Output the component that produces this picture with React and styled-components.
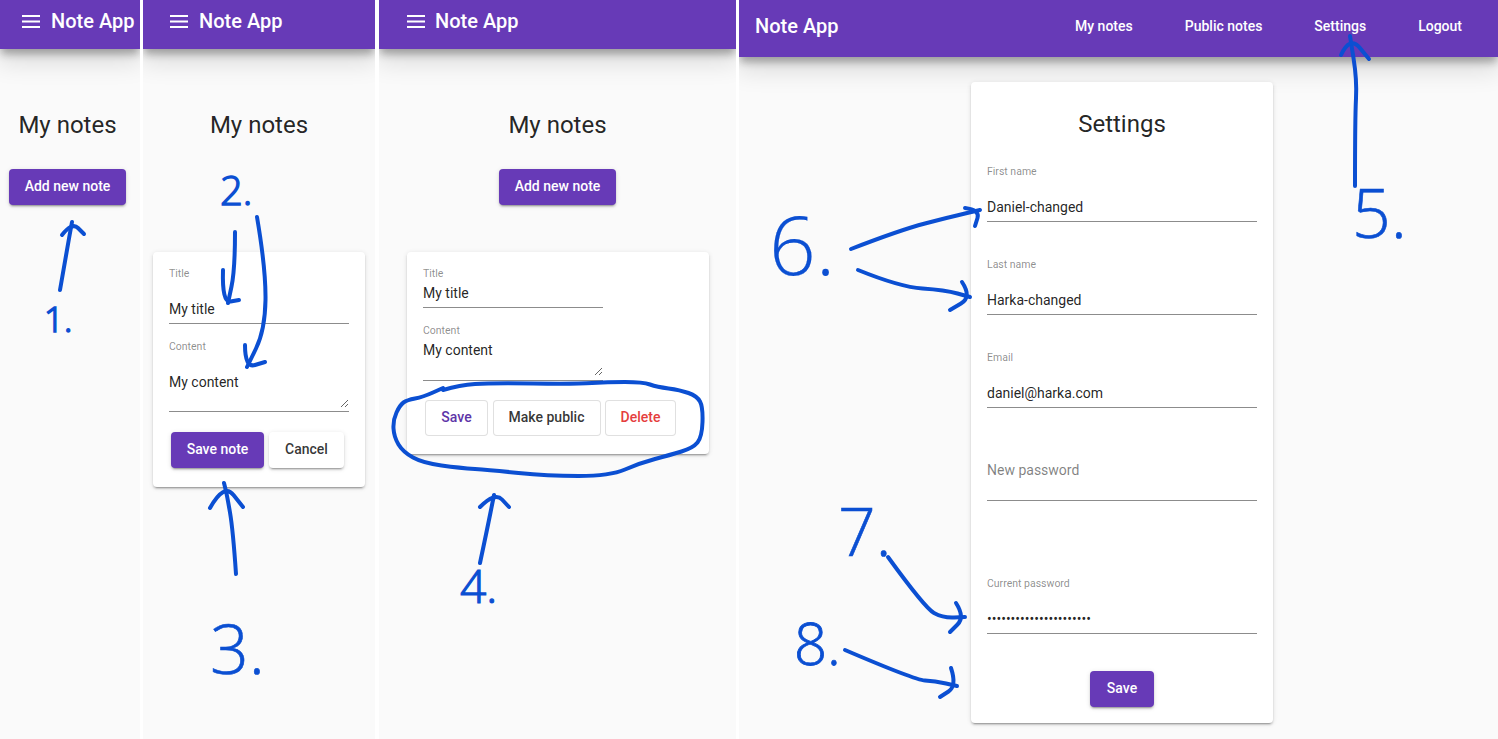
import styled, { createGlobalStyle } from "styled-components";

const GlobalStyle = createGlobalStyle`
   html, body {
      margin: 0;
      padding: 0;
      background: #fff;
   }
   * {
      box-sizing: border-box;
   }
`;

const Page = styled.div`
   position: relative;
   display: flex;
   width: 1498px;
   height: 739px;
   overflow: hidden;
   background: #fff;
   font-family: Roboto, "Liberation Sans", sans-serif;
   color: rgba(0, 0, 0, 0.87);
`;

const Panel = styled.section`
   display: flex;
   flex-direction: column;
   flex: none;
   width: ${(props) => props.$width}px;
   margin-left: ${(props) => props.$left || 0}px;
   height: 100%;
   overflow: hidden;
   background: #fafafa;
`;

const Toolbar = styled.header`
   display: flex;
   align-items: center;
   flex: none;
   height: ${(props) => (props.$wide ? 57 : 49)}px;
   padding: 0 ${(props) => (props.$wide ? 36 : 0)}px
      ${(props) => (props.$wide ? 5 : 7)}px ${(props) => props.$pad}px;
   background: #673ab7;
   color: #fff;
   box-shadow: 0 6px 8px -1px rgba(0, 0, 0, 0.3), 0 12px 24px 2px rgba(0, 0, 0, 0.12);
`;

const MenuIcon = styled.svg`
   flex: none;
   width: 18px;
   height: 13px;
   margin-right: ${(props) => props.$gap}px;
   fill: #fff;
`;

const AppTitle = styled.span`
   font-size: 20px;
   font-weight: 500;
   line-height: 28px;
   white-space: nowrap;
`;

const Nav = styled.nav`
   display: flex;
   gap: 52px;
   margin-left: auto;
`;

const NavLink = styled.a`
   font-size: 14px;
   font-weight: 500;
   color: #fff;
   white-space: nowrap;
`;

const Main = styled.main`
   display: flex;
   flex-direction: column;
   align-items: center;
   flex: 1;
   padding-right: ${(props) => props.$right || 0}px;
   padding-left: ${(props) => props.$left || 0}px;
`;

const Heading = styled.h1`
   margin: 60px 0 28px;
   font-size: 24px;
   font-weight: 400;
   line-height: 32px;
`;

const Card = styled.div`
   width: ${(props) => props.$width}px;
   margin-top: ${(props) => props.$top}px;
   margin-left: ${(props) => props.$shift || 0}px;
   padding: ${(props) => props.$padTop || 16}px 16px ${(props) => props.$padBottom}px;
   background: #fff;
   border-radius: 4px;
   box-shadow: 0 3px 1px -2px rgba(0, 0, 0, 0.2), 0 2px 2px 0 rgba(0, 0, 0, 0.14),
      0 1px 5px 0 rgba(0, 0, 0, 0.12);
`;

const CardTitle = styled.h2`
   margin: 0 0 26px;
   font-size: 24px;
   font-weight: 400;
   line-height: 32px;
   text-align: center;
`;

const Field = styled.label`
   display: block;
   width: ${(props) => props.$width || 180}px;
   margin-top: ${(props) => props.$top || 0}px;
   padding-bottom: ${(props) => (props.$pad === undefined ? 4 : props.$pad)}px;
   border-bottom: 1px solid #8c8c8c;
`;

const FieldLabel = styled.span`
   display: block;
   height: 12px;
   margin-bottom: ${(props) => props.$gap}px;
   font-size: 10.5px;
   line-height: 12px;
   color: rgba(0, 0, 0, 0.46);
`;

const Input = styled.input`
   display: block;
   width: 100%;
   height: 20px;
   padding: 0;
   border: none;
   outline: none;
   background: transparent;
   font: 400 14px/20px Roboto, "Liberation Sans", sans-serif;
   color: rgba(0, 0, 0, 0.87);
   &::placeholder {
      color: rgba(0, 0, 0, 0.5);
      opacity: 1;
   }
`;

const TextArea = styled.textarea`
   display: block;
   width: 100%;
   height: 36px;
   padding: 0;
   margin: 0;
   border: none;
   outline: none;
   background: transparent;
   font: 400 14px/20px Roboto, "Liberation Sans", sans-serif;
   color: rgba(0, 0, 0, 0.87);
   resize: vertical;
`;

const ButtonRow = styled.div`
   display: flex;
   gap: ${(props) => props.$gap}px;
   margin-top: ${(props) => props.$top}px;
   padding-left: 2px;
`;

const Button = styled.button`
   display: block;
   flex: none;
   height: 36px;
   width: ${(props) => props.$width}px;
   padding: 0 0 2px;
   margin: 0;
   border: none;
   border-radius: 4px;
   font: 500 14px/34px Roboto, "Liberation Sans", sans-serif;
   background: ${(props) => (props.$primary ? "#673ab7" : "#fff")};
   color: ${(props) => (props.$primary ? "#fff" : "rgba(0, 0, 0, 0.8)")};
   box-shadow: 0 3px 1px -2px rgba(0, 0, 0, 0.2), 0 2px 2px 0 rgba(0, 0, 0, 0.14),
      0 1px 5px 0 rgba(0, 0, 0, 0.12);
`;

const StrokedButton = styled.button`
   display: block;
   flex: none;
   height: 36px;
   width: ${(props) => props.$width}px;
   padding: 0 0 2px;
   margin: 0;
   border: 1px solid rgba(0, 0, 0, 0.12);
   border-radius: 4px;
   background: #fff;
   font: 500 14px/32px Roboto, "Liberation Sans", sans-serif;
   color: ${(props) => props.$color || "rgba(0, 0, 0, 0.8)"};
`;

const CenteredAction = styled.div`
   display: flex;
   justify-content: center;
   margin-top: 37px;
`;

const Ink = styled.svg`
   position: absolute;
   top: 0;
   left: 0;
   width: 1498px;
   height: 739px;
   pointer-events: none;
`;

const InkLine = styled.path`
   fill: none;
   stroke: #0b4fd2;
   stroke-width: 4px;
   stroke-linecap: round;
   stroke-linejoin: round;
`;

const InkNumber = styled.text`
   font-family: "Open Sans", "Noto Sans", sans-serif;
   font-weight: 300;
   font-size: ${(props) => props.$size}px;
   fill: #0b4fd2;
   stroke: #0b4fd2;
   stroke-width: ${(props) => props.$weight}px;
`;

// rounds a list of points off into one pen stroke
function smooth(points) {
   let d = `M${points[0][0]} ${points[0][1]}`;
   for (let i = 1; i < points.length - 1; i++) {
      const midX = (points[i][0] + points[i + 1][0]) / 2;
      const midY = (points[i][1] + points[i + 1][1]) / 2;
      d += ` Q${points[i][0]} ${points[i][1]} ${midX} ${midY}`;
   }
   const last = points[points.length - 1];
   return `${d} L${last[0]} ${last[1]}`;
}

const strokes = [
   // 1
   [[60, 290], [66, 255], [72, 222]],
   [[62, 235], [72, 222], [84, 234]],
   // 2
   [[235, 232], [235, 270], [228, 303]],
   [[223, 270], [222, 303], [239, 300]],
   [[257, 217], [266, 270], [265, 330], [247, 367]],
   [[245, 345], [245, 368], [265, 362]],
   // 3
   [[236, 574], [233, 530], [227, 495], [224, 483]],
   [[210, 508], [224, 483], [243, 507]],
   // 4 and the loop round the buttons
   [
      [443, 390], [460, 385], [490, 383], [577, 384], [607, 382], [643, 382], [657, 387],
      [680, 390], [697, 396], [703, 407], [702, 437], [693, 448], [670, 455], [640, 463],
      [610, 476], [547, 476], [490, 470], [460, 468], [423, 463], [403, 452], [394, 437],
      [393, 420], [400, 405], [407, 400], [423, 397], [443, 388],
   ],
   [[480, 563], [487, 530], [494, 495]],
   [[480, 507], [495, 492], [509, 507]],
   // 5
   [[1355, 186], [1355, 117], [1357, 80], [1350, 36]],
   [[1341, 55], [1350, 36], [1369, 59]],
   // 6
   [[851, 249], [900, 230], [950, 217], [980, 210]],
   [[965, 208], [980, 210], [975, 226]],
   [[858, 270], [900, 287], [945, 290], [970, 297]],
   [[962, 282], [972, 297], [950, 310]],
   // 7
   [[888, 557], [925, 608], [943, 618], [965, 617]],
   [[956, 603], [965, 617], [950, 632]],
   // 8
   [[845, 650], [915, 680], [935, 681], [957, 686]],
   [[951, 668], [957, 686], [940, 697]],
];

const numbers = [
   { label: "1.", x: 44, y: 332, size: 35, weight: 1.6 },
   { label: "2.", x: 220, y: 205, size: 40, weight: 1.4 },
   { label: "3.", x: 210, y: 674, size: 68, weight: 0.6 },
   { label: "4.", x: 460, y: 603, size: 46, weight: 1.2 },
   { label: "5.", x: 1352, y: 238, size: 68, weight: 0.6 },
   { label: "6.", x: 769, y: 275, size: 82, weight: 0.2 },
   { label: "7.", x: 838, y: 556, size: 66, weight: 0.6 },
   { label: "8.", x: 794, y: 665, size: 58, weight: 0.8 },
];

function MobileBar({ pad, gap = 11 }) {
   return (
      <Toolbar $pad={pad}>
         <MenuIcon viewBox="0 0 18 13" $gap={gap}>
            <rect width="18" height="2" />
            <rect y="5.5" width="18" height="2" />
            <rect y="11" width="18" height="2" />
         </MenuIcon>
         <AppTitle>Note App</AppTitle>
      </Toolbar>
   );
}

function App() {
   return (
      <Page>
         <GlobalStyle />

         <Panel $width={140}>
            <MobileBar pad={22} />
            <Main $right={5}>
               <Heading>My notes</Heading>
               <Button $primary $width={117}>Add new note</Button>
            </Main>
         </Panel>

         <Panel $width={232} $left={3}>
            <MobileBar pad={27} />
            <Main>
               <Heading>My notes</Heading>
               <Card $width={212} $top={83} $padBottom={19}>
                  <Field>
                     <FieldLabel $gap={19}>Title</FieldLabel>
                     <Input readOnly defaultValue="My title" />
                  </Field>
                  <Field $top={17} $pad={3}>
                     <FieldLabel $gap={19}>Content</FieldLabel>
                     <TextArea readOnly defaultValue="My content" />
                  </Field>
                  <ButtonRow $gap={5} $top={20}>
                     <Button $primary $width={93}>Save note</Button>
                     <Button $width={75}>Cancel</Button>
                  </ButtonRow>
               </Card>
            </Main>
         </Panel>

         <Panel $width={357} $left={4}>
            <MobileBar pad={28} gap={10} />
            <Main>
               <Heading>My notes</Heading>
               <Button $primary $width={117}>Add new note</Button>
               <Card $width={302} $top={47} $shift={1} $padBottom={18}>
                  <Field>
                     <FieldLabel $gap={3}>Title</FieldLabel>
                     <Input readOnly defaultValue="My title" />
                  </Field>
                  <Field $top={17}>
                     <FieldLabel $gap={3}>Content</FieldLabel>
                     <TextArea readOnly defaultValue="My content" />
                  </Field>
                  <ButtonRow $gap={4.5} $top={19}>
                     <StrokedButton $width={63} $color="#5e35a8">Save</StrokedButton>
                     <StrokedButton $width={108}>Make public</StrokedButton>
                     <StrokedButton $width={71} $color="#e53e3e">Delete</StrokedButton>
                  </ButtonRow>
               </Card>
            </Main>
         </Panel>

         <Panel $width={759} $left={3}>
            <Toolbar $wide $pad={16}>
               <AppTitle>Note App</AppTitle>
               <Nav>
                  <NavLink>My notes</NavLink>
                  <NavLink>Public notes</NavLink>
                  <NavLink>Settings</NavLink>
                  <NavLink>Logout</NavLink>
               </Nav>
            </Toolbar>
            <Main $left={7}>
               <Card $width={302} $top={25} $padTop={26} $padBottom={16}>
                  <CardTitle>Settings</CardTitle>
                  <Field $width={270}>
                     <FieldLabel $gap={19}>First name</FieldLabel>
                     <Input readOnly defaultValue="Daniel-changed" />
                  </Field>
                  <Field $width={270} $top={37}>
                     <FieldLabel $gap={19}>Last name</FieldLabel>
                     <Input readOnly defaultValue="Harka-changed" />
                  </Field>
                  <Field $width={270} $top={37}>
                     <FieldLabel $gap={19}>Email</FieldLabel>
                     <Input readOnly defaultValue="daniel@harka.com" />
                  </Field>
                  <Field $width={270} $top={52} $pad={20}>
                     <Input readOnly placeholder="New password" />
                  </Field>
                  <Field $width={270} $top={77}>
                     <FieldLabel $gap={19}>Current password</FieldLabel>
                     <Input readOnly type="password" defaultValue="danielharkapassword123" />
                  </Field>
                  <CenteredAction>
                     <Button $primary $width={64}>Save</Button>
                  </CenteredAction>
               </Card>
            </Main>
         </Panel>

         <Ink viewBox="0 0 1498 739">
            {strokes.map((points, index) => (
               <InkLine key={index} d={smooth(points)} />
            ))}
            {numbers.map((item) => (
               <InkNumber key={item.label} x={item.x} y={item.y} $size={item.size} $weight={item.weight}>
                  {item.label}
               </InkNumber>
            ))}
         </Ink>
      </Page>
   );
}

export default App;
